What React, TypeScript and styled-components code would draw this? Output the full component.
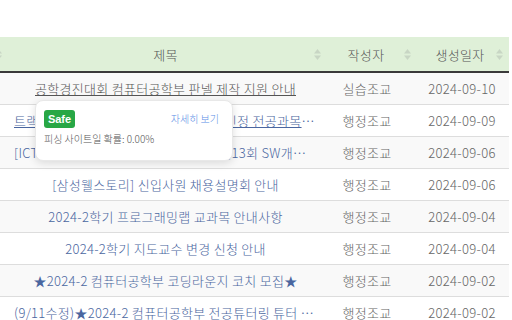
import React from "react";
import styled, { createGlobalStyle } from "styled-components";

const GlobalStyle = createGlobalStyle`
  html, body {
    margin: 0;
    padding: 0;
    background: #ffffff;
    overflow: hidden;
  }
  body {
    font-family: "Noto Sans CJK KR", "Noto Sans", sans-serif;
    font-weight: 300;
  }
`;

const Page = styled.div`
  width: 512px;
  height: 320px;
  padding-top: 37px;
  box-sizing: border-box;
  overflow: hidden;
  position: relative;
`;

const Table = styled.div`
  margin-left: -52px;
  display: grid;
  grid-template-columns: 60px 319px 90px 92px;
  width: 561px;
  letter-spacing: 0.3px;
`;

const HeadCell = styled.div<{ $shift?: number }>`
  height: 34px;
  background: #dff0d8;
  border-bottom: 2px solid #3a3a3a;
  display: flex;
  align-items: center;
  justify-content: center;
  position: relative;
  font-size: 13px;
  color: #555555;
  padding-right: ${(p) => p.$shift ?? 4}px;
`;

const SortIcon = styled.svg`
  position: absolute;
  right: 6px;
  top: 12px;
`;

const Cell = styled.div<{ $odd: boolean; $shift?: number }>`
  height: 31px;
  border-bottom: 1px solid #dddddd;
  background: ${(p) => (p.$odd ? "#f9f9f9" : "#ffffff")};
  display: flex;
  align-items: center;
  justify-content: center;
  font-size: 13px;
  color: #666666;
  min-width: 0;
  white-space: nowrap;
  padding-right: ${(p) => p.$shift ?? 0}px;
`;

const TitleCell = styled(Cell)`
  padding: 0 10px 0 6px;
`;

const TitleLink = styled.a<{ $hover?: boolean; $underline?: boolean }>`
  color: ${(p) => (p.$hover ? "#555555" : "#4a66a0")};
  text-decoration: ${(p) => (p.$hover || p.$underline ? "underline" : "none")};
  overflow: hidden;
  text-overflow: ellipsis;
  white-space: nowrap;
  max-width: 100%;
`;

const Popup = styled.div`
  position: absolute;
  left: 35px;
  top: 100px;
  width: 198px;
  height: 61px;
  box-sizing: border-box;
  background: #ffffff;
  border: 1px solid #e8e8e8;
  border-radius: 8px;
  box-shadow: 0 2px 8px rgba(0, 0, 0, 0.13);
  padding: 9px 8px 0 8px;
  display: flex;
  flex-direction: column;
  gap: 3px;
`;

const PopupTop = styled.div`
  display: flex;
  align-items: flex-start;
  justify-content: space-between;
`;

const Badge = styled.span`
  background: #28a745;
  color: #ffffff;
  font-family: "Liberation Sans", Arial, sans-serif;
  font-weight: bold;
  font-size: 11px;
  border-radius: 3px;
  width: 31px;
  height: 18px;
  display: flex;
  align-items: center;
  justify-content: center;
`;

const More = styled.a`
  color: #5a8ee6;
  font-size: 10px;
  text-decoration: none;
  margin-top: 1px;
  margin-right: 5px;
`;

const Prob = styled.div`
  font-size: 10px;
  color: #555555;
`;

const rows = [
  { title: "공학경진대회 컴퓨터공학부 판넬 제작 지원 안내", author: "실습조교", date: "2024-09-10", hover: true },
  { title: "트랙(Track)제 및 마이크로디그리 학점인정 전공과목 안내", author: "행정조교", date: "2024-09-09", underline: true },
  { title: "[ICT 소식] 정보통신산업진흥원 2024 제13회 SW개발 경진대회 안내", author: "행정조교", date: "2024-09-06" },
  { title: "[삼성웰스토리] 신입사원 채용설명회 안내", author: "행정조교", date: "2024-09-06" },
  { title: "2024-2학기 프로그래밍랩 교과목 안내사항", author: "행정조교", date: "2024-09-04" },
  { title: "2024-2학기 지도교수 변경 신청 안내", author: "행정조교", date: "2024-09-04" },
  { title: "★2024-2 컴퓨터공학부 코딩라운지 코치 모집★", author: "행정조교", date: "2024-09-02" },
  { title: "(9/11수정)★2024-2 컴퓨터공학부 전공튜터링 튜터 모집 안내", author: "행정조교", date: "2024-09-02" },
];

const Sort = () => (
  <SortIcon width="7" height="11" viewBox="0 0 7 11">
    <path d="M3.5 0 L7 4.5 L0 4.5 Z" fill="#c8d6c4" />
    <path d="M3.5 11 L7 6.5 L0 6.5 Z" fill="#c8d6c4" />
  </SortIcon>
);

const App = () => {
  return (
    <Page>
      <GlobalStyle />
      <Table>
        <HeadCell>
          <Sort />
        </HeadCell>
        <HeadCell>
          제목
          <Sort />
        </HeadCell>
        <HeadCell $shift={12}>
          작성자
          <Sort />
        </HeadCell>
        <HeadCell $shift={6}>
          생성일자
          <Sort />
        </HeadCell>
        {rows.map((row, index) => {
          const odd = index % 2 === 0;
          return (
            <React.Fragment key={index}>
              <Cell $odd={odd} />
              <TitleCell $odd={odd}>
                <TitleLink href="#" $hover={row.hover} $underline={row.underline}>
                  {row.title}
                </TitleLink>
              </TitleCell>
              <Cell $odd={odd} $shift={10}>
                {row.author}
              </Cell>
              <Cell $odd={odd} $shift={2}>
                {row.date}
              </Cell>
            </React.Fragment>
          );
        })}
      </Table>
      <Popup>
        <PopupTop>
          <Badge>Safe</Badge>
          <More href="#">자세히 보기</More>
        </PopupTop>
        <Prob>피싱 사이트일 확률: 0.00%</Prob>
      </Popup>
    </Page>
  );
};

export default App;
